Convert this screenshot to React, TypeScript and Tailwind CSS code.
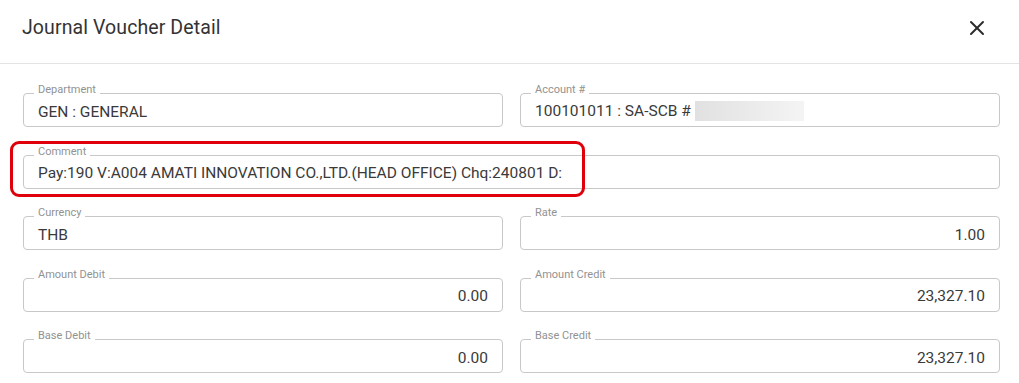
import React from 'react';
import { X } from 'lucide-react';

interface FieldProps {
  label: string;
  value: React.ReactNode;
  right?: boolean;
  wide?: boolean;
}

function Field({ label, value, right, wide }: FieldProps) {
  return (
    <div
      className={`relative h-[34px] rounded-[4px] border border-[#c8c8c8] px-[14px] flex items-center pt-[3px] ${
        wide ? 'col-span-2' : ''
      } ${right ? 'justify-end' : 'justify-start'}`}
    >
      <span className="absolute left-[10px] -top-[10px] bg-white px-[4px] text-[11px] leading-[12px] text-[#929292]">
        {label}
      </span>
      <span className="text-[15.5px] leading-[18px] text-[#3a3a3a] whitespace-nowrap">{value}</span>
    </div>
  );
}

export default function App() {
  return (
    <div className="relative w-[1019px] h-[383px] bg-white font-['Roboto',sans-serif] overflow-hidden">
      {/* Header */}
      <div className="h-[64px] border-b border-[#e3e3e3] flex items-center justify-between pl-[22px] pr-[30px] pb-[7px]">
        <h2 className="text-[19.5px] font-normal text-[#333] tracking-[0.1px]">Journal Voucher Detail</h2>
        <X size={24} strokeWidth={2} className="text-[#2b2b2b]" />
      </div>

      {/* Body */}
      <div className="grid grid-cols-2 gap-x-[17px] gap-y-[27.5px] pl-[23px] pr-[19px] pt-[29px]">
        <Field label="Department" value="GEN : GENERAL" />
        <Field
          label="Account #"
          value={
            <>
              100101011 : SA-SCB #{' '}
              <span className="inline-block align-middle w-[109px] h-[20px] -mt-[3px] bg-gradient-to-r from-[#e1e1e1] to-[#f4f4f4]" />
            </>
          }
        />
        <Field
          label="Comment"
          wide
          value="Pay:190 V:A004 AMATI INNOVATION CO.,LTD.(HEAD OFFICE) Chq:240801 D:"
        />
        <Field label="Currency" value="THB" />
        <Field label="Rate" value="1.00" right />
        <Field label="Amount Debit" value="0.00" right />
        <Field label="Amount Credit" value="23,327.10" right />
        <Field label="Base Debit" value="0.00" right />
        <Field label="Base Credit" value="23,327.10" right />
      </div>

      {/* Red highlight annotation */}
      <div className="absolute left-[10px] top-[141px] w-[575px] h-[56px] rounded-[9px] border-[3px] border-[#e0000b] pointer-events-none" />
    </div>
  );
}
